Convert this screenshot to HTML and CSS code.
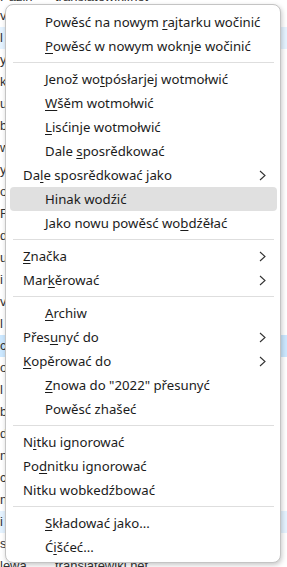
FILE: index.html
```html
<!DOCTYPE html>
<html lang="hsb">

<head>
    <meta charset="UTF-8">
    <title>Kontekstowy meni</title>
    <link rel="stylesheet" href="styles.css">
</head>

<body>
    <!-- lisćina powěsćow za menijom -->
    <div class="list">
        <div class="row head"><span class="who">Pazin</span><span class="what">translatewiki.net</span></div>
        <div class="row">v</div>
        <div class="row mark">l</div>
        <div class="row">y</div>
        <div class="row">k</div>
        <div class="row">u</div>
        <div class="row">b</div>
        <div class="row">w</div>
        <div class="row">y</div>
        <div class="row">o</div>
        <div class="row">F</div>
        <div class="row">d</div>
        <div class="row">u</div>
        <div class="row">i</div>
        <div class="row">v</div>
        <div class="row">l</div>
        <div class="row sel">c</div>
        <div class="row">o</div>
        <div class="row">l</div>
        <div class="row">b</div>
        <div class="row">d</div>
        <div class="row">n</div>
        <div class="row">c</div>
        <div class="row">n</div>
        <div class="row mark">i</div>
        <div class="row">s</div>
        <div class="row"><span class="who">lewa</span><span class="what">translatewiki.net</span></div>
    </div>

    <!-- kontekstowy meni -->
    <div class="menu">
        <div class="item"><span>Powěsć na nowym <u>r</u>ajtarku wočinić</span></div>
        <div class="item"><span><u>P</u>owěsć w nowym woknje wočinić</span></div>
        <div class="sep"></div>
        <div class="item"><span>Jenož wo<u>t</u>pósłarjej wotmołwić</span></div>
        <div class="item"><span><u>W</u>šěm wotmołwić</span></div>
        <div class="item"><span><u>L</u>isćinje wotmołwić</span></div>
        <div class="item"><span>Dale <u>s</u>posrědkować</span></div>
        <div class="item sub"><span>Da<u>l</u>e sposrědkować jako</span><svg class="arrow" width="7" height="11" viewBox="0 0 7 11"><polyline points="1,1 6,5.5 1,10" /></svg></div>
        <div class="item hover"><span>Hinak wodźić</span></div>
        <div class="item"><span>Jako nowu powěsć wo<u>b</u>dźěłać</span></div>
        <div class="sep"></div>
        <div class="item sub"><span><u>Z</u>načka</span><svg class="arrow" width="7" height="11" viewBox="0 0 7 11"><polyline points="1,1 6,5.5 1,10" /></svg></div>
        <div class="item sub"><span>Mar<u>k</u>ěrować</span><svg class="arrow" width="7" height="11" viewBox="0 0 7 11"><polyline points="1,1 6,5.5 1,10" /></svg></div>
        <div class="sep"></div>
        <div class="item"><span><u>A</u>rchiw</span></div>
        <div class="item sub"><span>Přes<u>u</u>nyć do</span><svg class="arrow" width="7" height="11" viewBox="0 0 7 11"><polyline points="1,1 6,5.5 1,10" /></svg></div>
        <div class="item sub"><span><u>K</u>opěrować do</span><svg class="arrow" width="7" height="11" viewBox="0 0 7 11"><polyline points="1,1 6,5.5 1,10" /></svg></div>
        <div class="item"><span><u>Z</u>nowa do "2022" přesunyć</span></div>
        <div class="item"><span>Powěsć zhašeć</span></div>
        <div class="sep"></div>
        <div class="item sub"><span>N<u>i</u>tku ignorować</span></div>
        <div class="item sub"><span>Po<u>d</u>nitku ignorować</span></div>
        <div class="item sub"><span>Nitku wobkedźbować</span></div>
        <div class="sep"></div>
        <div class="item"><span><u>S</u>kładować jako...</span></div>
        <div class="item"><span>Ć<u>i</u>šćeć...</span></div>
    </div>
</body>

</html>
```

FILE: styles.css
```css
body,
div {
    margin: 0;
    padding: 0;
}

body {
    background: #fff;
    font-family: "Liberation Sans", Arial, sans-serif;
    color: #1a1a1a;
    overflow: hidden;
}

/* lisćina w pozadku */
.list {
    margin-top: -12px;
}

.row {
    height: 22px;
    line-height: 22px;
    font-size: 13px;
    white-space: nowrap;
    color: #333;
}

.row.head {
    height: 17px;
    line-height: 17px;
}

.row.mark {
    background: #e5f3ff;
}

.row.sel {
    background: #cce8ff;
}

.who {
    display: inline-block;
    width: 55px;
}

/* meni */
.menu {
    position: absolute;
    left: 5px;
    top: 4px;
    width: 276px;
    box-sizing: border-box;
    padding: 5px 3px 3px 4px;
    background: #fff;
    border: 1px solid #c4c4c4;
    border-radius: 8px;
    box-shadow: 1px 2px 5px rgba(0, 0, 0, 0.22);
    font-family: "Noto Sans", "Open Sans", sans-serif;
    font-size: 13.2px;
    color: #1b1b1b;
}

.item {
    height: 24px;
    line-height: 24px;
    padding-left: 35px;
    padding-right: 11px;
    border-radius: 4px;
    display: flex;
    align-items: center;
    justify-content: space-between;
    white-space: nowrap;
}

.item.sub {
    padding-left: 13px;
}

.item.hover {
    background: #e0e0e0;
}

.item u {
    text-decoration-thickness: 1px;
    text-underline-offset: 2px;
}

.arrow {
    flex: none;
}

.arrow polyline {
    fill: none;
    stroke: #333;
    stroke-width: 1.1;
}

.sep {
    height: 1px;
    margin: 4px 3px;
    background: #dedede;
}
```
